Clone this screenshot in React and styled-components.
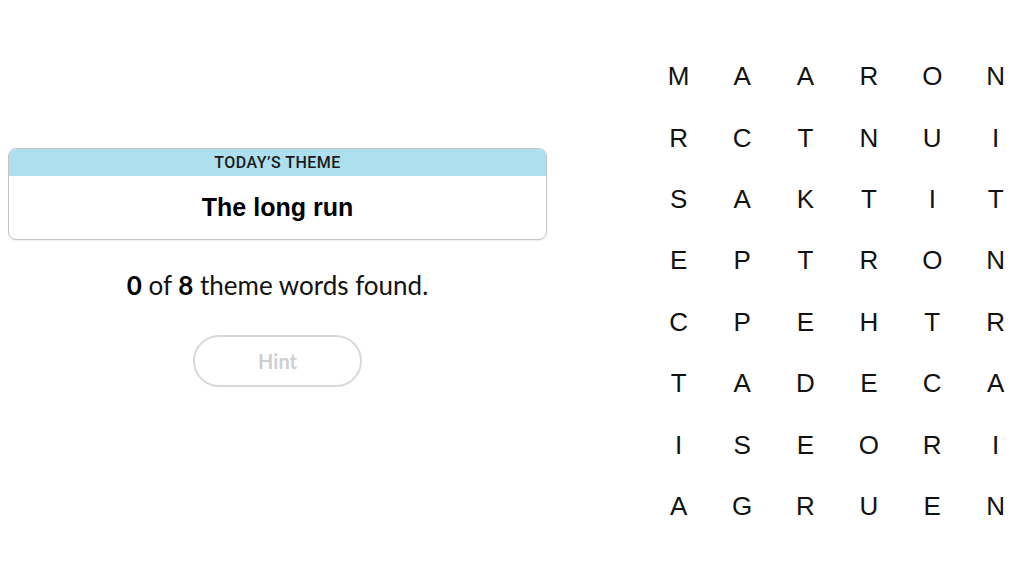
import React from "react";
import styled, { createGlobalStyle } from "styled-components";

const Global = createGlobalStyle`
  html, body { margin: 0; padding: 0; background: #fff; }
  body { font-family: "Liberation Sans", Arial, sans-serif; color: #121212; }
`;

const Page = styled.div`
  display: flex;
  width: 1024px;
  height: 576px;
  overflow: hidden;
`;

const LeftColumn = styled.section`
  flex: 0 0 539px;
  margin-left: 8px;
  padding-top: 148px;
  display: flex;
  flex-direction: column;
  align-items: center;
`;

const Card = styled.div`
  width: 100%;
  box-sizing: border-box;
  border: 1px solid #c4c4c4;
  border-radius: 8px;
  overflow: hidden;
  box-shadow: 0 1px 1px rgba(0,0,0,0.06);
`;

const CardHeader = styled.div`
  height: 27px;
  background: #aedfee;
  display: flex;
  align-items: center;
  justify-content: center;
  font-family: Roboto, "Liberation Sans", sans-serif;
  font-size: 16px;
  font-weight: 500;
  letter-spacing: 0.5px;
  color: #1a1a1a;
  text-transform: uppercase;
`;

const CardBody = styled.div`
  height: 63px;
  display: flex;
  align-items: center;
  justify-content: center;
  font-family: "Liberation Sans", Arial, sans-serif;
  font-size: 25px;
  font-weight: 700;
  color: #000;
`;

const Progress = styled.p`
  margin: 30px 0 0;
  font-family: Lato, "Liberation Sans", sans-serif;
  font-size: 26px;
  line-height: 30px;
  color: #121212;
  b { font-weight: 700; color: #000; }
`;

const HintButton = styled.button`
  margin-top: 35px;
  width: 169px;
  height: 52px;
  border: 2px solid #d9d9d9;
  border-radius: 26px;
  background: #fff;
  font-family: Lato, "Liberation Sans", sans-serif;
  font-size: 20px;
  font-weight: 700;
  color: #cfcfcf;
  cursor: default;
`;

const Board = styled.div`
  margin-left: 100px;
  margin-top: 46px;
  display: grid;
  grid-template-columns: repeat(6, 63.4px);
  grid-auto-rows: 61.4px;
  flex: 0 0 auto;
  align-self: flex-start;
`;

const Cell = styled.div`
  display: flex;
  align-items: center;
  justify-content: center;
  font-family: "Liberation Sans", Arial, sans-serif;
  font-size: 26px;
  color: #121212;
`;

const letters = [
  "MAARON",
  "RCTNUI",
  "SAKTIT",
  "EPTRON",
  "CPEHTR",
  "TADECA",
  "ISEORI",
  "AGRUEN",
];

export default function App() {
  return (
    <>
      <Global />
      <Page>
        <LeftColumn>
          <Card>
            <CardHeader>Today’s Theme</CardHeader>
            <CardBody>The long run</CardBody>
          </Card>
          <Progress>
            <b>0</b> of <b>8</b> theme words found.
          </Progress>
          <HintButton disabled>Hint</HintButton>
        </LeftColumn>
        <Board>
          {letters.flatMap((row, r) =>
            row.split("").map((ch, c) => <Cell key={`${r}-${c}`}>{ch}</Cell>)
          )}
        </Board>
      </Page>
    </>
  );
}
